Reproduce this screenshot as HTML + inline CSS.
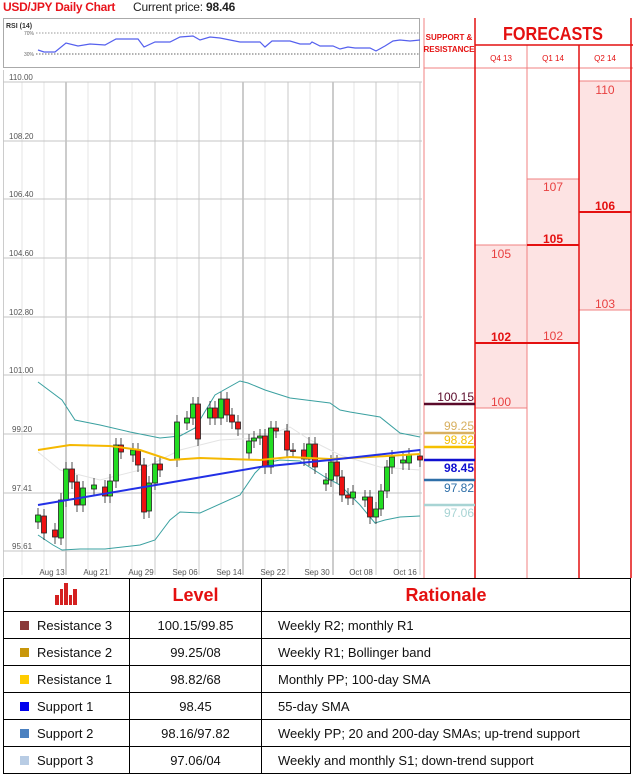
<!DOCTYPE html>
<html><head><meta charset="utf-8"><style>
body{margin:0;width:633px;height:778px;background:#fff;font-family:"Liberation Sans",sans-serif;position:relative;overflow:hidden}
.t{position:absolute;white-space:nowrap}
table{position:absolute;left:3px;top:578px;width:628px;border-collapse:collapse;font-size:13px;color:#111}
td{border:1.5px solid #000;padding:0}
tr{height:27px}
</style></head><body>
<div class="t" style="left:3px;top:0px;font-size:12px;font-weight:bold;color:#e8141c;letter-spacing:-0.3px">USD/JPY Daily Chart</div>
<div class="t" style="left:133px;top:0px;font-size:12px;color:#222;letter-spacing:-0.2px">Current price: <b>98.46</b></div>
<svg style="position:absolute;left:0;top:0" width="633" height="578">
<rect x="3.5" y="18.5" width="416" height="49" fill="none" stroke="#aaa"/>
<text x="6" y="28" font-size="7" font-family="Liberation Sans" fill="#333" font-weight="bold">RSI (14)</text>
<text x="24" y="35" font-size="5" fill="#666" font-family="Liberation Sans">70%</text>
<text x="24" y="56" font-size="5" fill="#666" font-family="Liberation Sans">30%</text>
<line x1="36" y1="33" x2="420" y2="33" stroke="#999" stroke-dasharray="1.5 1.5"/>
<line x1="36" y1="54" x2="420" y2="54" stroke="#666" stroke-dasharray="1.5 1.5"/>
<polyline fill="none" stroke="#5560ee" stroke-width="1.2" points="38,50 44,52 55,52 66,43 78,46 90,44 105,45 116,39 138,39 144,47 155,42 170,42 180,37 193,36 200,40 210,37 220,38 240,42 260,42 265,47 272,41 290,41 300,44 310,44 312,42 320,46 333,46 340,49 348,47 355,48 370,48 376,51 385,46 393,41 400,40 410,41 420,40"/>
<g stroke="#e6e6e6"><line x1="22" y1="82" x2="22" y2="575"/><line x1="44" y1="82" x2="44" y2="575"/><line x1="88" y1="82" x2="88" y2="575"/><line x1="132" y1="82" x2="132" y2="575"/><line x1="177" y1="82" x2="177" y2="575"/><line x1="221" y1="82" x2="221" y2="575"/><line x1="265" y1="82" x2="265" y2="575"/><line x1="310" y1="82" x2="310" y2="575"/><line x1="354" y1="82" x2="354" y2="575"/><line x1="398" y1="82" x2="398" y2="575"/></g>
<g stroke="#c8c8c8"><line x1="110" y1="82" x2="110" y2="575"/><line x1="155" y1="82" x2="155" y2="575"/><line x1="199" y1="82" x2="199" y2="575"/><line x1="288" y1="82" x2="288" y2="575"/><line x1="376" y1="82" x2="376" y2="575"/><line x1="420" y1="82" x2="420" y2="575"/></g>
<g stroke="#999"><line x1="66" y1="82" x2="66" y2="575"/><line x1="243" y1="82" x2="243" y2="575"/><line x1="333" y1="82" x2="333" y2="575"/></g>
<line x1="3.5" y1="70" x2="3.5" y2="577" stroke="#ccc"/>
<g stroke="#c4c4c4"><line x1="3" y1="82" x2="422" y2="82"/><line x1="3" y1="141" x2="422" y2="141"/><line x1="3" y1="199" x2="422" y2="199"/><line x1="3" y1="258" x2="422" y2="258"/><line x1="3" y1="317" x2="422" y2="317"/><line x1="3" y1="375" x2="422" y2="375"/><line x1="3" y1="434" x2="422" y2="434"/><line x1="3" y1="493" x2="422" y2="493"/><line x1="3" y1="551" x2="422" y2="551"/></g>
<g font-size="8" fill="#555" font-family="Liberation Sans"><text x="9" y="80">110.00</text><text x="9" y="139">108.20</text><text x="9" y="197">106.40</text><text x="9" y="256">104.60</text><text x="9" y="315">102.80</text><text x="9" y="373">101.00</text><text x="12" y="432">99.20</text><text x="12" y="491">97.41</text><text x="12" y="549">95.61</text></g>
<g font-size="8" fill="#555" font-family="Liberation Sans" text-anchor="middle"><text x="52" y="575">Aug 13</text><text x="96" y="575">Aug 21</text><text x="141" y="575">Aug 29</text><text x="185" y="575">Sep 06</text><text x="229" y="575">Sep 14</text><text x="273" y="575">Sep 22</text><text x="317" y="575">Sep 30</text><text x="361" y="575">Oct 08</text><text x="405" y="575">Oct 16</text></g>
<polyline fill="none" stroke="#e4e4e4" points="38,452 60,470 100,480 140,470 180,450 220,440 260,438 290,427 310,440 340,455 380,467 420,470"/>
<polyline fill="none" stroke="#3aa0a0" points="38,382 62,400 75,420 100,425 130,432 160,438 170,437 180,436 195,428 215,395 240,381 248,383 265,390 290,398 330,403 340,410 350,412 380,417 400,433 420,437"/>
<polyline fill="none" stroke="#3aa0a0" points="38,535 53,545 62,550 80,549 105,549 140,545 155,540 170,520 180,512 200,513 240,495 255,473 265,463 280,460 300,461 325,477 340,485 360,505 375,523 385,520 400,517 420,516"/>
<g id="c" stroke="#222" stroke-width="0.8"></g>
<polyline fill="none" stroke="#f5b800" stroke-width="2" points="38,450 70,445 110,446 140,450 170,460 200,458 260,460 290,457 330,459 370,457 420,454"/>
<polyline fill="none" stroke="#2230e6" stroke-width="2" points="38,505 150,486 260,467 330,460 420,450"/>
<g fill="#fde3e3" stroke="#f08080"><rect x="475" y="245" width="52" height="163"/><rect x="527" y="179" width="52" height="164"/><rect x="579" y="81" width="52" height="229"/></g>
<g stroke="#f08080"><line x1="424" y1="18" x2="424" y2="578"/><line x1="424" y1="68" x2="633" y2="68"/><line x1="527" y1="45" x2="527" y2="578"/></g>
<g stroke="#e41010" stroke-width="1.5"><line x1="475" y1="18" x2="475" y2="578"/><line x1="579" y1="45" x2="579" y2="578"/><line x1="631" y1="18" x2="631" y2="578"/><line x1="475" y1="45" x2="633" y2="45"/><line x1="475" y1="343" x2="579" y2="343" stroke-width="2"/><line x1="527" y1="245" x2="579" y2="245" stroke-width="2"/><line x1="579" y1="212" x2="631" y2="212" stroke-width="2"/></g>
<text x="449" y="40" font-size="8" font-weight="bold" fill="#e41010" text-anchor="middle" font-family="Liberation Sans">SUPPORT &amp;</text>
<text x="449" y="52" font-size="8" font-weight="bold" fill="#e41010" text-anchor="middle" font-family="Liberation Sans">RESISTANCE</text>
<text x="553" y="40" font-size="18" font-weight="bold" fill="#e41010" text-anchor="middle" font-family="Liberation Sans" textLength="100" lengthAdjust="spacingAndGlyphs">FORECASTS</text>
<g font-size="8" fill="#e41010" text-anchor="middle" font-family="Liberation Sans"><text x="501" y="61">Q4 13</text><text x="553" y="61">Q1 14</text><text x="605" y="61">Q2 14</text></g>
<g font-size="12" fill="#e84040" text-anchor="middle" font-family="Liberation Sans"><text x="501" y="258">105</text><text x="501" y="406">100</text><text x="553" y="191">107</text><text x="553" y="340">102</text><text x="605" y="94">110</text><text x="605" y="308">103</text></g>
<g font-size="12" fill="#e41010" font-weight="bold" text-anchor="middle" font-family="Liberation Sans"><text x="501" y="341">102</text><text x="553" y="243">105</text><text x="605" y="210">106</text></g>
<g stroke-width="2.5"><line x1="424" y1="404" x2="475" y2="404" stroke="#5a0a2a"/><line x1="424" y1="433" x2="475" y2="433" stroke="#d8b060"/><line x1="424" y1="447" x2="475" y2="447" stroke="#f5c000"/><line x1="424" y1="460" x2="475" y2="460" stroke="#1010d0"/><line x1="424" y1="480" x2="475" y2="480" stroke="#2e6fa8"/><line x1="424" y1="505" x2="475" y2="505" stroke="#a8d4d4"/></g>
<g font-size="12" text-anchor="end" font-family="Liberation Sans"><text x="474" y="401" fill="#5a0a2a">100.15</text><text x="474" y="430" fill="#d8b060">99.25</text><text x="474" y="444" fill="#f5c000">98.82</text><text x="474" y="472" fill="#1010d0" font-weight="bold">98.45</text><text x="474" y="492" fill="#2e6fa8">97.82</text><text x="474" y="517" fill="#a8d4d4">97.06</text></g>
</svg>
<table>
<tr style="height:33px"><td style="width:125px;text-align:center"><svg width="28" height="26" viewBox="0 0 28 26"><g fill="#d42020"><rect x="2" y="14" width="4" height="10"/><rect x="7" y="8" width="3" height="16"/><rect x="11" y="2" width="4" height="22"/><rect x="16" y="14" width="3" height="10"/><rect x="20" y="8" width="4" height="16"/></g></svg></td><td style="width:131px;text-align:center;color:#e41010;font-weight:bold;font-size:18px">Level</td><td style="text-align:center;color:#e41010;font-weight:bold;font-size:18px">Rationale</td></tr>
<tr><td style="padding-left:16px"><span style="display:inline-block;width:9px;height:9px;background:#8b3a3a;margin-right:8px"></span>Resistance 3</td><td style="text-align:center">100.15/99.85</td><td style="padding-left:16px">Weekly R2; monthly R1</td></tr>
<tr><td style="padding-left:16px"><span style="display:inline-block;width:9px;height:9px;background:#c8960a;margin-right:8px"></span>Resistance 2</td><td style="text-align:center">99.25/08</td><td style="padding-left:16px">Weekly R1; Bollinger band</td></tr>
<tr><td style="padding-left:16px"><span style="display:inline-block;width:9px;height:9px;background:#ffcc00;margin-right:8px"></span>Resistance 1</td><td style="text-align:center">98.82/68</td><td style="padding-left:16px">Monthly PP; 100-day SMA</td></tr>
<tr><td style="padding-left:16px"><span style="display:inline-block;width:9px;height:9px;background:#0000ee;margin-right:8px"></span>Support 1</td><td style="text-align:center">98.45</td><td style="padding-left:16px">55-day SMA</td></tr>
<tr><td style="padding-left:16px"><span style="display:inline-block;width:9px;height:9px;background:#4a80c0;margin-right:8px"></span>Support 2</td><td style="text-align:center">98.16/97.82</td><td style="padding-left:16px">Weekly PP; 20 and 200-day SMAs; up-trend support</td></tr>
<tr><td style="padding-left:16px"><span style="display:inline-block;width:9px;height:9px;background:#b8cce4;margin-right:8px"></span>Support 3</td><td style="text-align:center">97.06/04</td><td style="padding-left:16px">Weekly and monthly S1; down-trend support</td></tr>
</table>
<script>
var d=[[38,515,522,1],[44,516,533,0],[55,530,537,0],[61,500,538,1],[66,469,500,1],[72,469,482,0],[77,482,505,0],[83,488,505,1],[94,485,489,1],[105,487,496,0],[110,481,496,1],[116,445,481,1],[121,445,452,0],[133,450,455,1],[138,450,465,0],[144,465,512,0],[149,483,511,1],[155,464,483,1],[160,464,470,0],[177,422,460,1],[187,418,423,1],[193,404,418,1],[198,404,439,0],[210,408,418,1],[215,408,418,0],[221,399,418,1],[227,399,415,0],[232,415,422,0],[238,422,429,0],[249,441,453,1],[254,438,441,1],[260,436,438,1],[265,436,467,0],[271,428,467,1],[276,428,431,0],[287,431,450,0],[293,450,451,0],[304,450,459,0],[309,444,459,1],[315,444,467,0],[326,480,484,1],[331,462,480,1],[337,462,476,0],[342,477,495,0],[348,495,498,0],[353,492,498,1],[365,497,500,1],[370,497,517,0],[376,509,517,1],[381,491,509,1],[387,467,491,1],[392,457,467,1],[403,460,463,1],[409,455,463,1],[420,456,460,0]];
var g=document.getElementById('c'),s='';
d.forEach(function(c){var x=c[0],t=c[1],b=c[2];s+='<line x1="'+x+'" y1="'+(t-7)+'" x2="'+x+'" y2="'+(b+7)+'"/><rect x="'+(x-2.5)+'" y="'+t+'" width="5" height="'+Math.max(b-t,1.5)+'" fill="'+(c[3]?'#22dd22':'#ee1111')+'"/>';});
g.innerHTML=s;
</script>
</body></html>
